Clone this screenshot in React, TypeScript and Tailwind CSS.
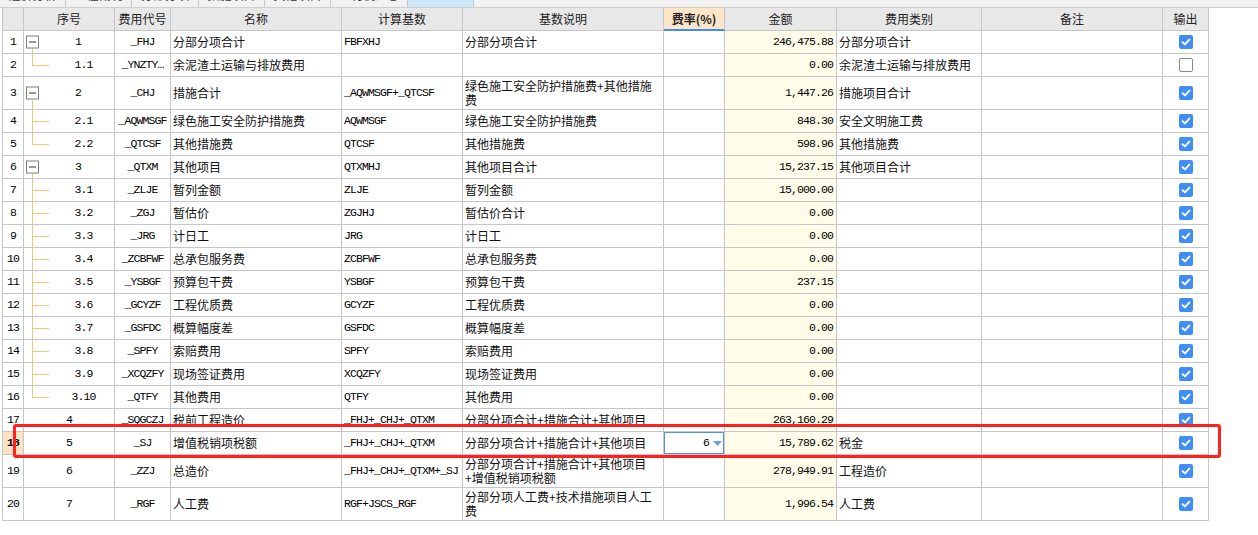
import React from "react";

type Kind = "parent" | "child" | "last" | "none";

interface FeeRow {
  n: number;
  seq: string;
  kind: Kind;
  code: string;
  name: string;
  base: string;
  desc: string;
  rate?: string;
  amount: string;
  cat: string;
  out: boolean;
  tall?: boolean;
  sel?: boolean;
}

const rows: FeeRow[] = [
  { n: 1, seq: "1", kind: "parent", code: "_FHJ", name: "分部分项合计", base: "FBFXHJ", desc: "分部分项合计", amount: "246,475.88", cat: "分部分项合计", out: true },
  { n: 2, seq: "1.1", kind: "last", code: "_YNZTY…", name: "余泥渣土运输与排放费用", base: "", desc: "", amount: "0.00", cat: "余泥渣土运输与排放费用", out: false },
  { n: 3, seq: "2", kind: "parent", code: "_CHJ", name: "措施合计", base: "_AQWMSGF+_QTCSF", desc: "绿色施工安全防护措施费+其他措施\n费", amount: "1,447.26", cat: "措施项目合计", out: true, tall: true },
  { n: 4, seq: "2.1", kind: "child", code: "_AQWMSGF", name: "绿色施工安全防护措施费", base: "AQWMSGF", desc: "绿色施工安全防护措施费", amount: "848.30", cat: "安全文明施工费", out: true },
  { n: 5, seq: "2.2", kind: "last", code: "_QTCSF", name: "其他措施费", base: "QTCSF", desc: "其他措施费", amount: "598.96", cat: "其他措施费", out: true },
  { n: 6, seq: "3", kind: "parent", code: "_QTXM", name: "其他项目", base: "QTXMHJ", desc: "其他项目合计", amount: "15,237.15", cat: "其他项目合计", out: true },
  { n: 7, seq: "3.1", kind: "child", code: "_ZLJE", name: "暂列金额", base: "ZLJE", desc: "暂列金额", amount: "15,000.00", cat: "", out: true },
  { n: 8, seq: "3.2", kind: "child", code: "_ZGJ", name: "暂估价", base: "ZGJHJ", desc: "暂估价合计", amount: "0.00", cat: "", out: true },
  { n: 9, seq: "3.3", kind: "child", code: "_JRG", name: "计日工", base: "JRG", desc: "计日工", amount: "0.00", cat: "", out: true },
  { n: 10, seq: "3.4", kind: "child", code: "_ZCBFWF", name: "总承包服务费", base: "ZCBFWF", desc: "总承包服务费", amount: "0.00", cat: "", out: true },
  { n: 11, seq: "3.5", kind: "child", code: "_YSBGF", name: "预算包干费", base: "YSBGF", desc: "预算包干费", amount: "237.15", cat: "", out: true },
  { n: 12, seq: "3.6", kind: "child", code: "_GCYZF", name: "工程优质费", base: "GCYZF", desc: "工程优质费", amount: "0.00", cat: "", out: true },
  { n: 13, seq: "3.7", kind: "child", code: "_GSFDC", name: "概算幅度差", base: "GSFDC", desc: "概算幅度差", amount: "0.00", cat: "", out: true },
  { n: 14, seq: "3.8", kind: "child", code: "_SPFY", name: "索赔费用", base: "SPFY", desc: "索赔费用", amount: "0.00", cat: "", out: true },
  { n: 15, seq: "3.9", kind: "child", code: "_XCQZFY", name: "现场签证费用", base: "XCQZFY", desc: "现场签证费用", amount: "0.00", cat: "", out: true },
  { n: 16, seq: "3.10", kind: "last", code: "_QTFY", name: "其他费用", base: "QTFY", desc: "其他费用", amount: "0.00", cat: "", out: true },
  { n: 17, seq: "4", kind: "none", code: "_SQGCZJ", name: "税前工程造价", base: "_FHJ+_CHJ+_QTXM", desc: "分部分项合计+措施合计+其他项目", amount: "263,160.29", cat: "", out: true },
  { n: 18, seq: "5", kind: "none", code: "_SJ", name: "增值税销项税额", base: "_FHJ+_CHJ+_QTXM", desc: "分部分项合计+措施合计+其他项目", rate: "6", amount: "15,789.62", cat: "税金", out: true, sel: true },
  { n: 19, seq: "6", kind: "none", code: "_ZZJ", name: "总造价", base: "_FHJ+_CHJ+_QTXM+_SJ", desc: "分部分项合计+措施合计+其他项目\n+增值税销项税额", amount: "278,949.91", cat: "工程造价", out: true, tall: true },
  { n: 20, seq: "7", kind: "none", code: "_RGF", name: "人工费", base: "RGF+JSCS_RGF", desc: "分部分项人工费+技术措施项目人工\n费", amount: "1,996.54", cat: "人工费", out: true, tall: true },
];

const tabs = [
  { label: "造价分析", w: "w-[66px]" },
  { label: "工程概况", w: "w-[66px]" },
  { label: "分部分项", w: "w-[67px]" },
  { label: "措施项目", w: "w-[66px]" },
  { label: "其他项目", w: "w-[66px]" },
  { label: "人材机汇总", w: "w-[77px]" },
];

const grid = "grid grid-cols-[21px_91px_56px_171px_121px_201px_61px_112px_145px_181px_46px]";
const cell = "border-r border-b border-[#c6c6c6] flex items-center overflow-hidden whitespace-nowrap";
const cjk = "font-['Noto_Sans_CJK_SC',sans-serif] text-[12px] leading-[14px]";
const mono = "font-['Liberation_Mono','Noto_Sans_CJK_SC',monospace] text-[11.5px] tracking-[-0.9px] text-black";
const line = "bg-[#f5c677]";

function TreeCell({ r }: { r: FeeRow }) {
  const pad = r.kind === "parent" ? "pl-[18px]" : r.kind === "none" ? "pl-0" : "pl-[29px]";
  return (
    <div className={`${cell} relative justify-center ${pad} ${mono}`}>
      {r.sel && <div className="absolute -left-[2px] top-0 bottom-0 w-[2px] bg-[#4a94ea]" />}
      {r.kind === "parent" && (
        <>
          <div className={`absolute left-[8px] top-[calc(50%+6px)] -bottom-px w-px ${line}`} />
          <div className="absolute left-[2px] top-1/2 -translate-y-1/2 w-[13px] h-[13px] border border-[#7f7f7f] bg-white">
            <div className="absolute left-[2px] right-[2px] top-[5px] h-px bg-[#333]" />
          </div>
        </>
      )}
      {(r.kind === "child" || r.kind === "last") && (
        <>
          <div className={`absolute left-[8px] top-0 w-px ${line} ${r.kind === "child" ? "-bottom-px" : "h-1/2"}`} />
          <div className={`absolute left-[8px] top-1/2 w-[17px] h-px ${line}`} />
        </>
      )}
      <span>{r.seq}</span>
    </div>
  );
}

function Check({ on }: { on: boolean }) {
  if (!on) return <div className="w-[14px] h-[14px] rounded-[2px] border border-[#8a8a8a] bg-white" />;
  return (
    <div className="w-[14px] h-[14px] rounded-[2px] bg-[#3f8ef5] flex items-center justify-center">
      <svg width="10" height="10" viewBox="0 0 10 10">
        <path d="M1.6 5.2 L4 7.4 L8.4 2.6" fill="none" stroke="white" strokeWidth="1.9" strokeLinecap="round" strokeLinejoin="round" />
      </svg>
    </div>
  );
}

function RateEditor({ value }: { value: string }) {
  return (
    <div className="absolute -left-px -right-px -top-px -bottom-px border-2 border-[#4a94ea] bg-white flex items-center justify-end gap-[4px] pr-[1px]">
      <span className={mono}>{value}</span>
      <svg width="9" height="5" viewBox="0 0 9 5">
        <path d="M0 0 H9 L4.5 5 Z" fill="#6b9fd6" />
      </svg>
    </div>
  );
}

function DataRow({ r }: { r: FeeRow }) {
  const h = r.tall ? "h-[33px]" : "h-[23px]";
  return (
    <div className={`${grid} ${h} text-[#111]`}>
      <div className={`${cell} justify-center ${mono} ${r.sel ? "bg-[#fde3c4] font-bold" : ""}`}>{r.n}</div>
      <TreeCell r={r} />
      <div className={`${cell} justify-center ${mono}`}>{r.code}</div>
      <div className={`${cell} pl-[2px] ${cjk}`}>{r.name}</div>
      <div className={`${cell} pl-[2px] ${mono}`}>{r.base}</div>
      <div className={`${cell} pl-[2px] ${cjk} whitespace-pre-line`}>{r.desc}</div>
      <div className={`${cell} relative`}>{r.rate && <RateEditor value={r.rate} />}</div>
      <div className={`${cell} justify-end pr-[3px] bg-[#fffde9] ${mono}`}>{r.amount}</div>
      <div className={`${cell} pl-[2px] ${cjk}`}>{r.cat}</div>
      <div className={cell} />
      <div className={`${cell} justify-center`}>
        <Check on={r.out} />
      </div>
    </div>
  );
}

export default function App() {
  const heads = ["", "序号", "费用代号", "名称", "计算基数", "基数说明", "费率(%)", "金额", "费用类别", "备注", "输出"];
  return (
    <div className="relative w-[1258px] h-[535px] bg-white overflow-hidden">
      <div className="h-[8px] bg-[#f2f2f2] border-b border-[#cfcfcf] flex">
        {tabs.map((t) => (
          <div key={t.label} className={`${t.w} h-full border-r border-[#c8c8c8] overflow-hidden flex justify-center`}>
            <span className={`${cjk} block -mt-[12px] text-[#333]`}>{t.label}</span>
          </div>
        ))}
        <div className="w-[66px] h-full bg-[#cce6fa] border-r border-[#c8c8c8]" />
      </div>

      <div className="ml-[2px] w-[1207px] border-l border-[#c6c6c6]">
        <div className={`${grid} h-[23px] bg-[#e8e8e8] text-[#222]`}>
          {heads.map((t, i) =>
            i === 6 ? (
              <div key={i} className={`${cell} justify-center bg-[#fde5c8] border-b-2 border-b-[#3d8fe9] font-bold ${cjk}`}>
                {t}
              </div>
            ) : (
              <div key={i} className={`${cell} justify-center ${cjk}`}>
                {t}
              </div>
            )
          )}
        </div>
        {rows.map((r) => (
          <DataRow key={r.n} r={r} />
        ))}
      </div>

      <div className="absolute left-[13px] top-[424px] w-[1208px] h-[34px] border-[3px] border-[#ff2020] rounded-[3px] pointer-events-none" />
    </div>
  );
}
